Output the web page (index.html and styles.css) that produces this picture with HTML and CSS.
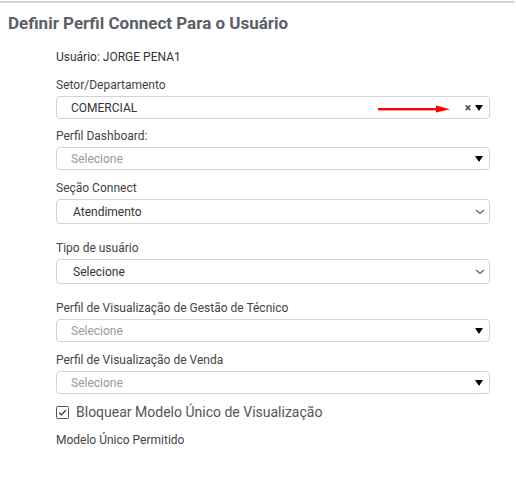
FILE: index.html
```html
<!DOCTYPE html>
<html lang="pt-BR">
<head>
<meta charset="utf-8">
<title>Definir Perfil Connect</title>
<link rel="stylesheet" href="styles.css">
</head>
<body>
<div class="panel">
  <h3 class="title">Definir Perfil Connect Para o Usuário</h3>
  <div class="form">
    <div class="user">Usuário: JORGE PENA1</div>

    <div class="field f-setor">
      <label class="lbl">Setor/Departamento</label>
      <div class="s2">
        <span class="s2-text">COMERCIAL</span>
        <span class="annot">
          <svg width="72" height="8" viewBox="0 0 72 8"><rect x="0" y="3" width="62" height="2.4" fill="#f00"/><polygon points="58,0.5 72,4.2 58,7.5" fill="#f00"/></svg>
        </span>
        <span class="s2-clear">×</span>
        <span class="caret"></span>
      </div>
    </div>

    <div class="field f-dash">
      <label class="lbl">Perfil Dashboard:</label>
      <div class="s2">
        <span class="s2-text ph">Selecione</span>
        <span class="caret"></span>
      </div>
    </div>

    <div class="field f-secao">
      <label class="lbl">Seção Connect</label>
      <div class="native">
        <span class="native-text">Atendimento</span>
        <svg class="chev" width="10" height="6" viewBox="0 0 10 6"><path d="M1 1 L5 4.5 L9 1" fill="none" stroke="#666" stroke-width="1.3"/></svg>
      </div>
    </div>

    <div class="field f-tipo">
      <label class="lbl">Tipo de usuário</label>
      <div class="native">
        <span class="native-text">Selecione</span>
        <svg class="chev" width="10" height="6" viewBox="0 0 10 6"><path d="M1 1 L5 4.5 L9 1" fill="none" stroke="#666" stroke-width="1.3"/></svg>
      </div>
    </div>

    <div class="field f-gestao">
      <label class="lbl">Perfil de Visualização de Gestão de Técnico</label>
      <div class="s2">
        <span class="s2-text ph">Selecione</span>
        <span class="caret"></span>
      </div>
    </div>

    <div class="field f-venda">
      <label class="lbl">Perfil de Visualização de Venda</label>
      <div class="s2">
        <span class="s2-text ph">Selecione</span>
        <span class="caret"></span>
      </div>
    </div>

    <div class="check">
      <svg class="box" width="13" height="13" viewBox="0 0 13 13"><rect x="0.5" y="0.5" width="12" height="12" rx="1" fill="#fff" stroke="#555"/><path d="M3 6.6 L5.4 9 L10 4" fill="none" stroke="#333" stroke-width="1.2"/></svg>
      <span class="check-text">Bloquear Modelo Único de Visualização</span>
    </div>

    <div class="modelo">Modelo Único Permitido</div>
  </div>
</div>
</body>
</html>
```

FILE: styles.css
```css
html, body {
  margin: 0;
  padding: 0;
  background: #fff;
}
body {
  font-family: Roboto, "Liberation Sans", Arial, sans-serif;
  color: #444;
  width: 516px;
  height: 489px;
  overflow: hidden;
}
.panel {
  margin-top: 1px;
  border-top: 2px solid #d4d4d4;
  width: 515px;
}
.title {
  margin: 0;
  padding: 10px 0 0 8px;
  height: 22px;
  line-height: 20px;
  font-size: 17px;
  font-weight: bold;
  color: #5b5f66;
}
.form {
  padding-left: 56px;
  width: 434px;
}
.user {
  margin-top: 14px;
  line-height: 16px;
  font-size: 12px;
  color: #333;
}
.field {
  display: flex;
  flex-direction: column;
}
.lbl {
  display: block;
  line-height: 16px;
  height: 16px;
  margin-bottom: 3px;
  font-size: 12px;
  color: #444;
}
.f-setor { margin-top: 12px; }
.f-dash { margin-top: 9px; }
.f-secao { margin-top: 10px; }
.f-tipo { margin-top: 16px; }
.f-gestao { margin-top: 16px; }
.f-venda { margin-top: 10px; }

.s2 {
  position: relative;
  box-sizing: border-box;
  height: 23px;
  border: 1px solid #cfd3d8;
  border-radius: 4px;
  display: flex;
  align-items: center;
  padding-left: 14px;
  padding-right: 6px;
  padding-top: 1px;
}
.s2-text {
  flex: 1;
  font-size: 12px;
  color: #333;
}
.s2-text.ph { color: #999; }
.s2-clear {
  font-size: 12px;
  font-weight: bold;
  color: #444;
  margin-right: 4px;
  line-height: 10px;
}
.caret {
  width: 0;
  height: 0;
  border-left: 4px solid transparent;
  border-right: 4px solid transparent;
  border-top: 6px solid #000;
}
.annot {
  position: absolute;
  left: 321px;
  top: 8px;
  line-height: 0;
}
.native {
  box-sizing: border-box;
  height: 25px;
  border: 1px solid #cfd3d8;
  border-radius: 4px;
  display: flex;
  align-items: center;
  padding-left: 16px;
  padding-right: 4px;
}
.native-text {
  flex: 1;
  font-size: 12px;
  color: #333;
}

.check {
  margin-top: 10px;
  display: flex;
  align-items: center;
  height: 16px;
}
.box { flex: none; }
.check-text {
  margin-left: 7px;
  font-size: 14px;
  color: #555;
}
.modelo {
  margin-top: 13px;
  font-size: 12px;
  line-height: 14px;
  color: #444;
}
```
